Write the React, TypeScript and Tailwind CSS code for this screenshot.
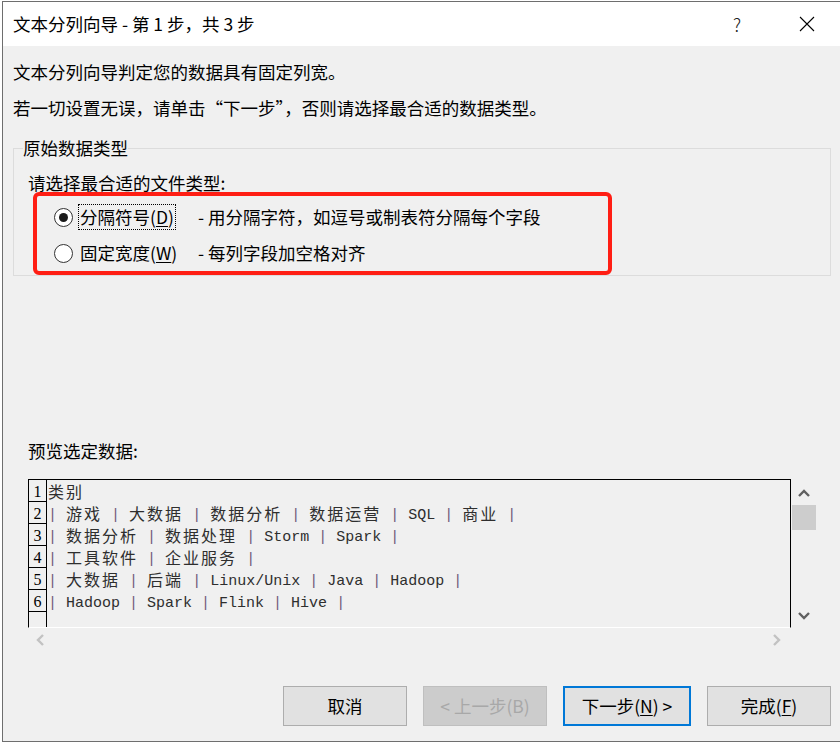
import React from "react";

const previewRows = [
  "类别",
  "| 游戏 | 大数据 | 数据分析 | 数据运营 | SQL | 商业 |",
  "| 数据分析 | 数据处理 | Storm | Spark |",
  "| 工具软件 | 企业服务 |",
  "| 大数据 | 后端 | Linux/Unix | Java | Hadoop |",
  "| Hadoop | Spark | Flink | Hive |",
];

// splits a preview line into CJK runs, pipes and latin runs
const PreviewLine = ({ text }: { text: string }) => {
  const parts = text.match(/[\u4e00-\u9fff]+|\||[^\u4e00-\u9fff|]+/g) || [];
  return (
    <>
      {parts.map((p, i) => {
        if (/[\u4e00-\u9fff]/.test(p)) {
          return (
            <span key={i} className="font-['Noto_Sans_CJK_SC',sans-serif] text-[16px] tracking-[2px] leading-[20px] h-[20px]">
              {p}
            </span>
          );
        }
        if (p === "|") {
          return (
            <span key={i} className="text-[#6e5a78] leading-[20px] h-[20px] mt-[3px]">
              |
            </span>
          );
        }
        return (
          <span key={i} className="leading-[20px] h-[20px] mt-[3px]">
            {p}
          </span>
        );
      })}
    </>
  );
};

const Radio = ({ checked }: { checked?: boolean }) => (
  <span className="w-[19px] h-[19px] rounded-full border border-[#333333] bg-white flex items-center justify-center shrink-0">
    {checked && <span className="w-[9px] h-[9px] rounded-full bg-[#1a1a1a]" />}
  </span>
);

const Chevron = ({ dir, color }: { dir: "up" | "down" | "left" | "right"; color: string }) => {
  const d =
    dir === "up"
      ? "M1 7 L6 2 L11 7"
      : dir === "down"
      ? "M1 2 L6 7 L11 2"
      : dir === "left"
      ? "M7 1 L2 6 L7 11"
      : "M2 1 L7 6 L2 11";
  const box = dir === "up" || dir === "down" ? "0 0 12 9" : "0 0 9 12";
  const cls = dir === "up" || dir === "down" ? "w-[12px] h-[9px]" : "w-[9px] h-[12px]";
  return (
    <svg viewBox={box} className={cls}>
      <path d={d} fill="none" stroke={color} strokeWidth="2.4" />
    </svg>
  );
};

const App = () => {
  return (
    <div className="w-[840px] h-[744px] bg-white pt-[1px] pl-[2px] overflow-hidden font-['Noto_Sans_CJK_SC',sans-serif] text-black">
      <div className="h-[741px] border-t border-l border-b border-[#6e6e6e] bg-[#f0f0f0] flex flex-col">
        {/* Title bar */}
        <div className="h-[44px] bg-white flex items-center pl-[10px] pr-[10px] shrink-0">
          <span className="text-[17.5px] whitespace-pre">文本分列向导 - 第 1 步，共 3 步</span>
          <div className="ml-auto flex items-center gap-[24px]">
            <span className="w-[46px] text-center text-[18px] font-light text-[#222]">?</span>
            <span className="w-[46px] flex justify-center">
              <svg viewBox="0 0 16 16" className="w-[16px] h-[16px]">
                <path d="M1 1 L15 15 M15 1 L1 15" stroke="#000" strokeWidth="1.1" />
              </svg>
            </span>
          </div>
        </div>

        {/* Body */}
        <div className="flex-1 flex flex-col pl-[10px] pr-[9px] text-[17.5px]">
          <div className="mt-[14px] leading-[24px]">文本分列向导判定您的数据具有固定列宽。</div>
          <div className="mt-[12px] leading-[24px]">若一切设置无误，请单击“下一步”，否则请选择最合适的数据类型。</div>

          <fieldset className="mt-[16px] border border-[#dcdcdc] px-[9px] pb-[8px]">
            <legend className="leading-[24px]">原始数据类型</legend>
            <div className="mt-[11px] ml-[5px] leading-[24px]">请选择最合适的文件类型:</div>
            <div className="relative mt-[8px] ml-[5px] flex flex-col gap-[8px]">
              <div className="h-[28px] flex items-center">
                <span className="ml-[26px]">
                  <Radio checked />
                </span>
                <span className="ml-[5px] w-[120px] shrink-0">
                  <span className="inline-block border border-dotted border-black px-[1px] leading-[24px]">
                    分隔符号(<span className="underline underline-offset-2">D</span>)
                  </span>
                </span>
                <span>- 用分隔字符，如逗号或制表符分隔每个字段</span>
              </div>
              <div className="h-[28px] flex items-center">
                <span className="ml-[26px]">
                  <Radio />
                </span>
                <span className="ml-[5px] w-[120px] shrink-0">
                  <span className="inline-block border border-transparent px-[1px] leading-[24px]">
                    固定宽度(<span className="underline underline-offset-2">W</span>)
                  </span>
                </span>
                <span>- 每列字段加空格对齐</span>
              </div>
              {/* red annotation box */}
              <div className="absolute left-[5px] top-[-11px] w-[579px] h-[83px] border-4 border-[#ff1e14] rounded-[6px] pointer-events-none" />
            </div>
          </fieldset>

          <div className="mt-[163px] ml-[15px] leading-[24px]">预览选定数据:</div>

          {/* Preview */}
          <div className="mt-[16px] ml-[15px] flex">
            <div className="w-[763px] h-[149px] border-t border-l border-r border-black border-b-white border-b flex flex-col font-['Liberation_Mono',monospace] text-[15px] text-[#2e2e2e] overflow-hidden">
              {previewRows.map((r, i) => (
                <div key={i} className="h-[22px] flex shrink-0">
                  <div className="w-[18px] h-[22px] border-r border-b border-black flex items-end justify-center shrink-0 font-['Liberation_Serif',serif] text-[16px] leading-[18px] text-black">
                    {i + 1}
                  </div>
                  <div className="h-[22px] pl-[1px] pt-[1px] flex items-start whitespace-pre">
                    <PreviewLine text={r} />
                  </div>
                </div>
              ))}
              <div className="w-[18px] flex-1 border-r border-black" />
            </div>
            <div className="w-[25px] h-[149px] pl-[1px] flex flex-col items-center">
              <div className="h-[26px] w-full flex items-center justify-center pt-[2px]">
                <Chevron dir="up" color="#606060" />
              </div>
              <div className="h-[25px] w-full bg-[#cdcdcd]" />
              <div className="flex-1" />
              <div className="h-[26px] w-full flex items-center justify-center">
                <Chevron dir="down" color="#606060" />
              </div>
            </div>
          </div>
          <div className="ml-[15px] w-[763px] h-[23px] flex items-center justify-between pl-[8px] pr-[10px]">
            <Chevron dir="left" color="#c2c2c2" />
            <Chevron dir="right" color="#c2c2c2" />
          </div>

          {/* Buttons */}
          <div className="mt-[35px] flex justify-end gap-[16px]">
            <button className="w-[124px] h-[40px] border border-[#adadad] bg-[#e1e1e1] text-[17.5px]">取消</button>
            <button className="w-[124px] h-[40px] border border-[#bfbfbf] bg-[#cccccc] text-[17.5px] text-[#a8a8a8]">
              &lt; 上一步(B)
            </button>
            <button className="w-[128px] h-[40px] border-2 border-[#0078d7] bg-[#e1e1e1] text-[17.5px]">
              下一步(<span className="underline underline-offset-2">N</span>) &gt;
            </button>
            <button className="w-[124px] h-[40px] border border-[#adadad] bg-[#e1e1e1] text-[17.5px]">
              完成(<span className="underline underline-offset-2">F</span>)
            </button>
          </div>
        </div>
      </div>
    </div>
  );
};

export default App;
